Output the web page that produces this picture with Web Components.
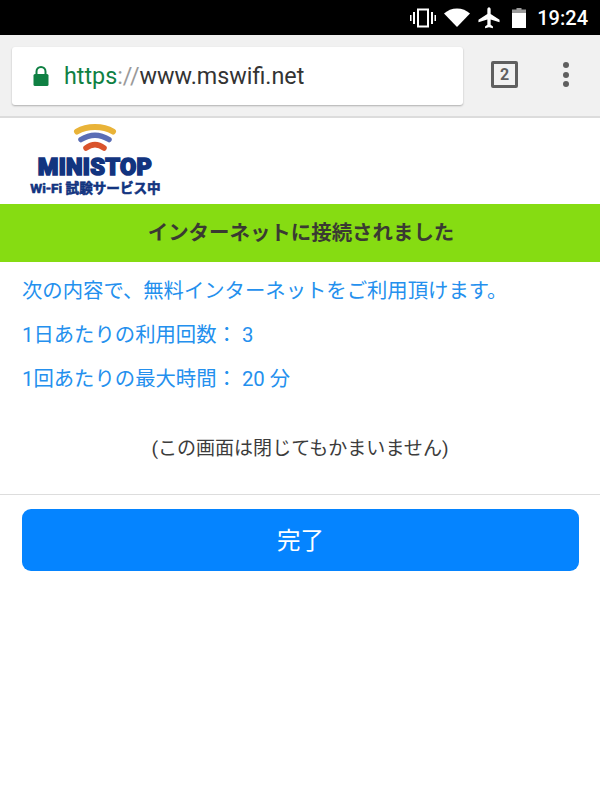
<!DOCTYPE html>
<html lang="ja">
<head>
<meta charset="utf-8">
<title>MINISTOP Wi-Fi</title>
<style>
  html, body { margin: 0; padding: 0; background: #fff; }
  body { width: 600px; height: 800px; overflow: hidden; font-family: Roboto, "Noto Sans CJK JP", sans-serif; }
</style>
</head>
<body>
<status-bar time="19:24"></status-bar>
<browser-toolbar tabs="2"></browser-toolbar>
<site-logo></site-logo>
<notice-bar>インターネットに接続されました</notice-bar>
<info-list>
  <info-line>次の内容で、無料インターネットをご利用頂けます。</info-line>
  <info-line>1日あたりの利用回数： 3</info-line>
  <info-line>1回あたりの最大時間： 20 分</info-line>
</info-list>
<close-note>(この画面は閉じてもかまいません)</close-note>
<done-button>完了</done-button>

<script>
(function () {
  'use strict';

  const CJK = 'Roboto, "Noto Sans CJK JP", sans-serif';

  // small helper, every element here is just style + markup in an open root
  function define(name, html) {
    customElements.define(name, class extends HTMLElement {
      constructor() {
        super();
        this.attachShadow({ mode: 'open' }).innerHTML = typeof html === 'function' ? html(this) : html;
      }
      connectedCallback() {
        if (typeof html === 'function') this.shadowRoot.innerHTML = html(this);
      }
    });
  }

  define('status-bar', (el) => `
    <style>
      :host { display: flex; align-items: center; justify-content: flex-end; height: 35px; background: #000; color: #fff; padding-right: 12px; box-sizing: border-box; }
      svg { display: block; fill: #fff; flex: none; }
      .time { font: 500 20px ${CJK}; margin-left: 11px; }
      .icons { display: flex; align-items: center; gap: 8px; }
      .battery { margin-left: 4px; }
    </style>
    <div class="icons">
      <svg width="26" height="20" viewBox="0 0 26 20"><path d="M7 .5h12v19H7zM9 2.500v15h8v-15z" fill-rule="evenodd"/><rect x="3" y="4" width="2" height="12"/><rect x="21" y="4" width="2" height="12"/><rect x="0" y="7" width="1.500" height="6"/><rect x="24.500" y="7" width="1.500" height="6"/></svg>
      <svg width="26" height="19" viewBox="0 0 26 19"><path d="M0 5.500C3.600 2.400 8 .5 13 .5s9.400 1.900 13 5L13 19z"/></svg>
      <svg width="22" height="22" viewBox="0 0 24 24"><path d="M23.500 16.500v-2.700l-9.700-6.100V2.500C13.800 1.400 13 .3 12 .3s-1.800 1.100-1.800 2.200v5.200L.5 13.800v2.700l9.700-3v5.900L7.700 21.200v2.100l4.300-1.200 4.300 1.200v-2.100l-2.500-1.800v-5.900z"/></svg>
      <svg class="battery" width="14" height="20" viewBox="0 0 14 20"><path d="M4.500 0h5v1.500H14V5H0V1.500h4.500z" fill="#9b9b9b"/><path d="M0 5h14v15H0z"/></svg>
    </div>
    <span class="time">${el.getAttribute('time') || ''}</span>
  `);

  define('browser-toolbar', (el) => `
    <style>
      :host { display: flex; align-items: center; height: 83px; box-sizing: border-box; background: #f1f1f1; border-bottom: 2px solid #dcdcdc; padding: 1px 0 0 12px; }
      .omnibox { flex: none; display: flex; align-items: center; width: 451px; height: 58px; box-sizing: border-box; background: #fff; border-radius: 3px; box-shadow: 0 1px 2px rgba(0,0,0,.28); padding-left: 21px; }
      .lock { flex: none; display: block; margin-right: 15px; }
      .url { font: 400 23.300px Roboto, sans-serif; color: #333; white-space: nowrap; }
      .scheme { color: #0f8043; }
      .sep { color: #9a9a9a; }
      .tabs { flex: none; margin: 0 0 3px 28px; width: 27px; height: 27px; box-sizing: border-box; border: 3px solid #5f5f5f; border-radius: 2px; display: flex; align-items: center; justify-content: center; font: 700 16px Roboto, sans-serif; color: #5f5f5f; }
      .menu { flex: none; margin: 0 0 3px 45px; display: flex; flex-direction: column; gap: 3.500px; }
      .menu i { display: block; width: 6px; height: 6px; border-radius: 50%; background: #5f5f5f; }
    </style>
    <div class="omnibox">
      <svg class="lock" width="16" height="21" viewBox="0 0 16 21"><path d="M3.500 8V5.500a4.500 4.500 0 0 1 9 0V8" fill="none" stroke="#0f8043" stroke-width="2"/><rect x="0.500" y="8" width="15" height="12" rx="1.500" fill="#0f8043"/></svg>
      <span class="url"><span class="scheme">https</span><span class="sep">://</span>www.mswifi.net</span>
    </div>
    <div class="tabs">${el.getAttribute('tabs') || ''}</div>
    <div class="menu"><i></i><i></i><i></i></div>
  `);

  define('site-logo', `
    <style>
      :host { display: block; height: 86px; box-sizing: border-box; padding: 6px 0 0 29px; overflow: hidden; }
      .logo { width: 133px; display: flex; flex-direction: column; align-items: center; }
      svg { display: block; margin-left: -1px; }
      .name { font: 900 23.500px/22px Roboto, sans-serif; color: #12347f; -webkit-text-stroke: 1.6px #12347f; letter-spacing: .3px; margin-top: 2px; margin-left: -1px; white-space: nowrap; }
      .sub { font: 700 13.600px/16px Roboto, "Noto Sans CJK JP", sans-serif; color: #12347f; -webkit-text-stroke: .6px #12347f; margin-top: 2px; white-space: nowrap; }
    </style>
    <div class="logo">
      <svg width="44" height="30" viewBox="0 0 44 30" fill="none" stroke-linecap="round">
        <path d="M4 7.500C14 1.500 30 1.500 40 7.500" stroke="#e9b338" stroke-width="6"/>
        <path d="M8 15.500C17 10 27 10 36 15.500" stroke="#5a6db5" stroke-width="5.500"/>
        <path d="M13 24C19 19.500 25 19.500 31 24" stroke="#d9532c" stroke-width="5.500"/>
      </svg>
      <div class="name">MINISTOP</div>
      <div class="sub">Wi-Fi 試験サービス中</div>
    </div>
  `);

  define('notice-bar', `
    <style>
      :host { display: flex; align-items: center; justify-content: center; height: 58px; box-sizing: border-box; padding: 0 0 5px 2px; background: #86dc12; color: #3a3a32; font: 700 20.450px ${CJK}; }
    </style>
    <slot></slot>
  `);

  define('info-list', `
    <style>
      :host { display: flex; flex-direction: column; gap: 14px; padding: 14px 22px 0; }
    </style>
    <slot></slot>
  `);

  define('info-line', `
    <style>
      :host { display: block; font: 400 20.350px/30px ${CJK}; color: #2490ee; white-space: nowrap; }
    </style>
    <slot></slot>
  `);

  define('close-note', `
    <style>
      :host { display: block; margin-top: 40px; padding-bottom: 30px; text-align: center; font: 400 19.050px/30px ${CJK}; color: #3c3c3c; border-bottom: 1px solid #ddd; }
    </style>
    <slot></slot>
  `);

  define('done-button', `
    <style>
      :host { display: flex; align-items: center; justify-content: center; height: 62px; box-sizing: border-box; padding-bottom: 3px; margin: 14px 21px 0 22px; background: #0584ff; border-radius: 9px; color: #fff; font: 400 23.500px ${CJK}; }
    </style>
    <slot></slot>
  `);
})();
</script>
</body>
</html>
